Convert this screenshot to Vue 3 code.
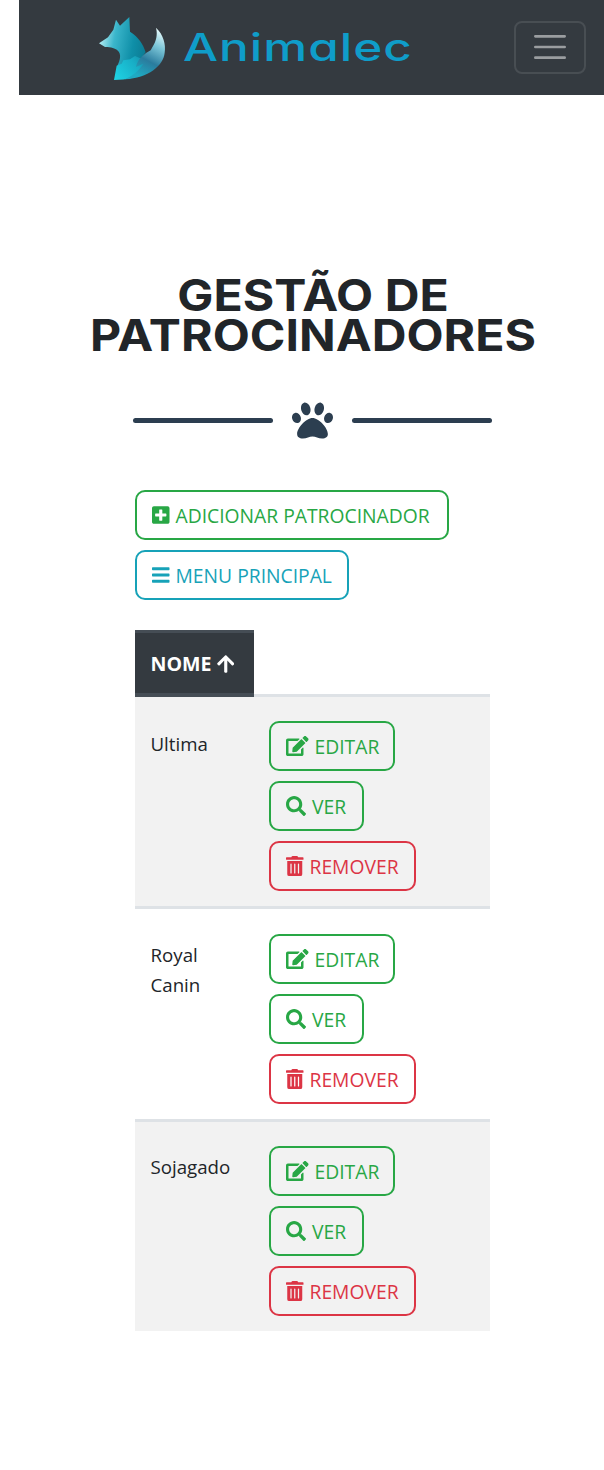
<script setup>
const addIcon = "M400 32H48C21.5 32 0 53.5 0 80v352c0 26.5 21.5 48 48 48h352c26.5 0 48-21.5 48-48V80c0-26.5-21.5-48-48-48zm-32 252c0 6.6-5.4 12-12 12h-92v92c0 6.6-5.4 12-12 12h-56c-6.6 0-12-5.4-12-12v-92H92c-6.6 0-12-5.4-12-12v-56c0-6.6 5.4-12 12-12h92v-92c0-6.6 5.4-12 12-12h56c6.6 0 12 5.4 12 12v92h92c6.6 0 12 5.4 12 12v56z";
const barsIcon = "M16 132h416c8.837 0 16-7.163 16-16V76c0-8.837-7.163-16-16-16H16C7.163 60 0 67.163 0 76v40c0 8.837 7.163 16 16 16zm0 160h416c8.837 0 16-7.163 16-16v-40c0-8.837-7.163-16-16-16H16c-8.837 0-16 7.163-16 16v40c0 8.837 7.163 16 16 16zm0 160h416c8.837 0 16-7.163 16-16v-40c0-8.837-7.163-16-16-16H16c-8.837 0-16 7.163-16 16v40c0 8.837 7.163 16 16 16z";
const pawIcon = "M256 224c-79.41 0-192 122.76-192 200.25 0 34.9 26.81 55.75 71.74 55.75 48.84 0 81.09-25.08 120.26-25.08 39.51 0 71.85 25.08 120.26 25.08 44.93 0 71.74-20.85 71.74-55.75C448 346.76 335.41 224 256 224zm-147.28-12.61c-10.4-34.65-42.44-57.09-71.56-50.13-29.12 6.96-44.29 40.69-33.89 75.34 10.4 34.65 42.44 57.09 71.56 50.13 29.12-6.96 44.29-40.69 33.89-75.34zm84.72-20.78c30.94-8.14 46.42-49.94 34.58-93.36s-46.52-72.01-77.46-63.87-46.42 49.94-34.58 93.36c11.84 43.42 46.52 72.01 77.46 63.87zm281.39-29.34c-29.12-6.96-61.15 15.48-71.56 50.13-10.4 34.65 4.77 68.38 33.89 75.34 29.12 6.96 61.15-15.48 71.56-50.13 10.4-34.65-4.77-68.38-33.89-75.34zm-156.27 29.34c30.94 8.14 65.62-20.45 77.46-63.87 11.84-43.42-3.64-85.21-34.58-93.36s-65.62 20.45-77.46 63.87c-11.84 43.42 3.64 85.22 34.58 93.36z";
const arrowIcon = "M34.9 289.5l-22.2-22.2c-9.4-9.4-9.4-24.6 0-33.9L207 39c9.4-9.4 24.6-9.4 33.9 0l194.3 194.3c9.4 9.4 9.4 24.6 0 33.9L413 289.4c-9.5 9.5-25 9.3-34.3-.4L264 168.6V456c0 13.3-10.7 24-24 24h-32c-13.3 0-24-10.7-24-24V168.6L69.2 289.1c-9.3 9.8-24.8 10-34.3.4z";

// acoes de cada linha da tabela
const actions = [
  { label: "Editar", cls: "green edit", box: "0 0 576 512", w: 22.5, d: "M402.6 83.2l90.2 90.2c3.8 3.8 3.8 10 0 13.8L274.4 405.6l-92.8 10.3c-12.4 1.4-22.9-9.1-21.5-21.5l10.3-92.8L388.8 83.2c3.8-3.8 10-3.8 13.8 0zm162-22.9l-48.8-48.8c-15.2-15.2-39.9-15.2-55.2 0l-35.4 35.4c-3.8 3.8-3.8 10 0 13.8l90.2 90.2c3.8 3.8 10 3.8 13.8 0l35.4-35.4c15.2-15.3 15.2-40 0-55.2zM384 346.2V448H64V128h229.8c3.2 0 6.2-1.3 8.5-3.5l40-40c7.6-7.6 2.2-20.5-8.5-20.5H48C21.5 64 0 85.5 0 112v352c0 26.5 21.5 48 48 48h352c26.5 0 48-21.5 48-48V306.2c0-10.7-12.9-16-20.5-8.5l-40 40c-2.2 2.3-3.5 5.3-3.5 8.5z" },
  { label: "Ver", cls: "green view", box: "0 0 512 512", w: 20, d: "M505 442.7L405.3 343c-4.5-4.5-10.6-7-17-7H372c27.6-35.3 44-79.7 44-128C416 93.1 322.9 0 208 0S0 93.1 0 208s93.1 208 208 208c48.3 0 92.7-16.4 128-44v16.3c0 6.4 2.5 12.5 7 17l99.7 99.7c9.4 9.4 24.6 9.4 33.9 0l28.3-28.3c9.4-9.4 9.4-24.6.1-34zM208 336c-70.7 0-128-57.2-128-128 0-70.7 57.2-128 128-128 70.7 0 128 57.2 128 128 0 70.7-57.2 128-128 128z" },
  { label: "Remover", cls: "red remove", box: "0 0 448 512", w: 17.5, d: "M32 464a48 48 0 0 0 48 48h288a48 48 0 0 0 48-48V128H32zm272-256a16 16 0 0 1 32 0v224a16 16 0 0 1-32 0zm-96 0a16 16 0 0 1 32 0v224a16 16 0 0 1-32 0zm-96 0a16 16 0 0 1 32 0v224a16 16 0 0 1-32 0zM432 32H312l-9.4-18.7A24 24 0 0 0 281.1 0H166.8a23.72 23.72 0 0 0-21.4 13.3L136 32H16A16 16 0 0 0 0 48v32a16 16 0 0 0 16 16h416a16 16 0 0 0 16-16V48a16 16 0 0 0-16-16z" },
];

const sponsors = ["Ultima", "Royal Canin", "Sojagado"];
</script>

<template>
  <div class="root">
    <nav class="navbar">
      <a class="brand">
        <svg class="fox" viewBox="0 0 360 225" width="120" height="75">
          <defs>
            <linearGradient id="foxBody" gradientUnits="userSpaceOnUse" x1="57" y1="95" x2="200" y2="120">
              <stop offset="0" stop-color="#b5edf3" />
              <stop offset="0.3" stop-color="#3bb6cb" />
              <stop offset="0.7" stop-color="#0f8fa8" />
              <stop offset="1" stop-color="#0c7a92" />
            </linearGradient>
            <linearGradient id="foxLow" gradientUnits="userSpaceOnUse" x1="105" y1="205" x2="190" y2="140">
              <stop offset="0" stop-color="#1ed3e4" />
              <stop offset="0.7" stop-color="#18aec6" />
              <stop offset="1" stop-color="#1693ad" />
            </linearGradient>
            <linearGradient id="foxTail" gradientUnits="userSpaceOnUse" x1="240" y1="60" x2="170" y2="190">
              <stop offset="0" stop-color="#e2f7fa" />
              <stop offset="0.3" stop-color="#7cc6d8" />
              <stop offset="0.65" stop-color="#2a7c9e" />
              <stop offset="1" stop-color="#1fa9c2" />
            </linearGradient>
          </defs>
          <path fill="url(#foxBody)" d="M57 97 L84 79 L100 56 L108 26 L120 44 L148 18 L150 62 C175 78 190 100 197 124 L170 160 L112 165 C120 148 126 130 112 118 C105 112 95 108 75 108 Z" />
          <path fill="url(#foxLow)" d="M102 207 L110 164 L125 158 L130 148 L150 145 L165 135 L200 150 L205 185 Q160 205 102 207 Z" />
          <path fill="url(#foxTail)" d="M228 50 C250 70 258 100 254 125 C250 165 205 200 135 205 C165 190 178 176 190 158 L168 168 C172 150 180 140 198 126 L212 118 L222 100 C231 82 232 66 228 50 Z" />
        </svg>
        <span class="brand-name">Animalec</span>
      </a>
      <button class="toggler" type="button" aria-label="menu">
        <svg viewBox="0 0 30 30" width="40" height="40">
          <path d="M4 7h22M4 15h22M4 23h22" stroke="rgba(255,255,255,.5)" stroke-width="2" stroke-linecap="round" />
        </svg>
      </button>
    </nav>

    <main class="content">
      <h1 class="title">Gestão de<br />Patrocinadores</h1>

      <div class="divider">
        <span class="line"></span>
        <svg class="paw" viewBox="0 0 512 512" width="41" height="41"><path :d="pawIcon" /></svg>
        <span class="line"></span>
      </div>

      <div class="panel">
        <a class="btn green add">
          <svg viewBox="0 0 448 512" width="17.5" height="20"><path :d="addIcon" /></svg>
          Adicionar Patrocinador
        </a>
        <a class="btn teal menu">
          <svg viewBox="0 0 448 512" width="17.5" height="20"><path :d="barsIcon" /></svg>
          Menu Principal
        </a>

        <table class="table">
          <thead>
            <tr>
              <th>Nome <svg viewBox="0 0 448 512" width="17.5" height="20"><path :d="arrowIcon" /></svg></th>
              <th class="blank"></th>
            </tr>
          </thead>
          <tbody>
            <tr v-for="name in sponsors" :key="name">
              <td class="name">{{ name }}</td>
              <td class="acts">
                <div class="acts-list">
                  <a v-for="a in actions" :key="a.label" class="btn" :class="a.cls">
                    <svg :viewBox="a.box" :width="a.w" height="20"><path :d="a.d" /></svg>
                    {{ a.label }}
                  </a>
                </div>
              </td>
            </tr>
          </tbody>
        </table>
      </div>
    </main>
  </div>
</template>

<style>
html, body {
  background: #fff;
}
</style>

<style scoped>
.root {
  width: 604px;
  height: 1470px;
  overflow: hidden;
  font-family: "Open Sans", "Liberation Sans", sans-serif;
  color: #212529;
}

/* barra de cima */
.navbar {
  margin-left: 19px;
  height: 95px;
  background: #343a40;
  display: flex;
  align-items: center;
  justify-content: space-between;
  padding: 0 18px 0 61px;
  box-sizing: border-box;
}
.brand {
  display: flex;
  align-items: center;
  margin-top: -1px;
}
.fox {
  display: block;
  margin-top: 3px;
}
.brand-name {
  display: inline-block;
  margin-left: -17px;
  font-family: "Inter", sans-serif;
  font-feature-settings: "cv11";
  font-size: 38px;
  font-weight: 500;
  letter-spacing: 0.8px;
  color: #0f9dc9;
  transform: scaleX(1.3);
  transform-origin: left center;
}
.toggler {
  width: 72px;
  height: 53px;
  margin-top: -1px;
  padding: 0;
  background: transparent;
  border: 2px solid rgba(255, 255, 255, 0.1);
  border-radius: 8px;
  display: flex;
  align-items: center;
  justify-content: center;
}

/* titulo */
.content {
  padding-left: 22px;
}
.title {
  margin: 0;
  padding-top: 180px;
  text-align: center;
  font-family: "Inter", sans-serif;
  font-size: 44px;
  font-weight: 700;
  line-height: 40px;
  text-transform: uppercase;
  color: #212529;
  transform: scaleX(1.095);
}
.divider {
  margin-top: 45px;
  padding-right: 2px;
  display: flex;
  align-items: center;
  justify-content: center;
  gap: 19px;
}
.line {
  width: 140px;
  height: 5px;
  border-radius: 3px;
  background: #2c3e50;
}
.paw {
  fill: #2c3e50;
  display: block;
}

.panel {
  margin: 49px 0 0 113px;
  width: 355px;
  display: flex;
  flex-direction: column;
  align-items: flex-start;
  gap: 10px;
}

/* botoes */
.btn {
  display: inline-flex;
  align-items: center;
  gap: 6px;
  height: 50px;
  box-sizing: border-box;
  padding: 0 0 0 15px;
  border: 2px solid;
  border-radius: 10px;
  font-size: 19.3px;
  text-transform: uppercase;
  white-space: nowrap;
}
.btn svg {
  fill: currentColor;
  flex: none;
}
.add { width: 314px; }
.menu { width: 214px; }
.edit { width: 126px; }
.view { width: 95px; }
.remove { width: 147px; }
.green { color: #28a745; }
.teal { color: #17a2b8; }
.red { color: #dc3545; }

/* tabela */
.table {
  margin-top: 20px;
  width: 355px;
  border-collapse: separate;
  border-spacing: 0;
  table-layout: fixed;
}
th {
  width: 119px;
  box-sizing: border-box;
  height: 67px;
  padding: 0 0 0 15.5px;
  background: #343a40;
  border-top: 3px solid #454d55;
  border-bottom: 4px solid #454d55;
  color: #fff;
  text-align: left;
  font-size: 19.6px;
  font-weight: 700;
  text-transform: uppercase;
  white-space: nowrap;
}
th svg {
  fill: #fff;
  vertical-align: -3px;
}
th.blank {
  width: auto;
  background: transparent;
  border: 0;
  border-bottom: 3px solid #dee2e6;
}
td {
  vertical-align: top;
  padding: 0;
  border-top: 3px solid #dee2e6;
}
tbody tr:first-child td {
  border-top: 0;
}
tbody tr:nth-child(odd) td {
  background: #f2f2f2;
}
.name {
  padding: 30px 16px 0 15.5px;
  font-size: 18.7px;
  line-height: 30px;
}
tbody tr:nth-child(1) .name { padding-top: 32px; }
tbody tr:nth-child(2) .name { padding-top: 31px; }
.acts {
  padding: 24px 16px 15px 15px;
}
tbody tr:nth-child(2) .acts { padding-top: 25px; }
.acts-list {
  display: flex;
  flex-direction: column;
  align-items: flex-start;
  gap: 10px;
}
</style>
